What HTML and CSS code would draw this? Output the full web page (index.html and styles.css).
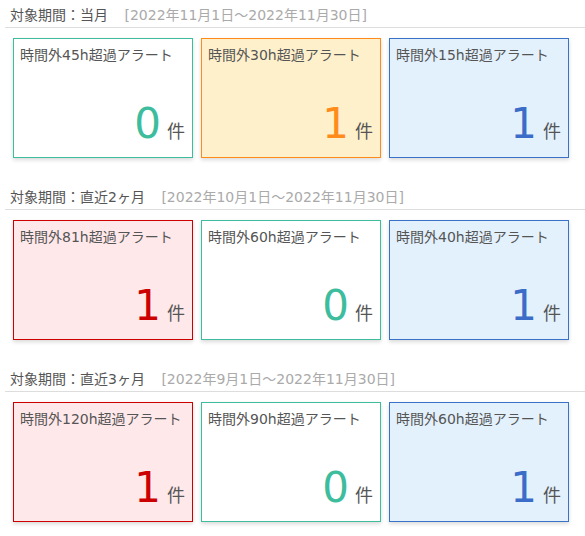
FILE: index.html
```html
<!DOCTYPE html>
<html lang="ja">
<head>
  <meta charset="UTF-8">
  <title>残業アラート</title>
  <link rel="stylesheet" href="styles.css">
</head>
<body>

  <div class="periodo">
    <div class="cabecera">
      <span class="nombre">対象期間：当月</span>
      <span class="rango">[2022年11月1日～2022年11月30日]</span>
    </div>
    <div class="tarjetas">
      <div class="tarjeta verde">
        <div class="titulo">時間外45h超過アラート</div>
        <div class="cuenta"><span class="num">0</span><span class="ken">件</span></div>
      </div>
      <div class="tarjeta naranja">
        <div class="titulo">時間外30h超過アラート</div>
        <div class="cuenta"><span class="num">1</span><span class="ken">件</span></div>
      </div>
      <div class="tarjeta azul">
        <div class="titulo">時間外15h超過アラート</div>
        <div class="cuenta"><span class="num">1</span><span class="ken">件</span></div>
      </div>
    </div>
  </div>

  <div class="periodo">
    <div class="cabecera">
      <span class="nombre">対象期間：直近2ヶ月</span>
      <span class="rango">[2022年10月1日～2022年11月30日]</span>
    </div>
    <div class="tarjetas">
      <div class="tarjeta rojo">
        <div class="titulo">時間外81h超過アラート</div>
        <div class="cuenta"><span class="num">1</span><span class="ken">件</span></div>
      </div>
      <div class="tarjeta verde">
        <div class="titulo">時間外60h超過アラート</div>
        <div class="cuenta"><span class="num">0</span><span class="ken">件</span></div>
      </div>
      <div class="tarjeta azul">
        <div class="titulo">時間外40h超過アラート</div>
        <div class="cuenta"><span class="num">1</span><span class="ken">件</span></div>
      </div>
    </div>
  </div>

  <div class="periodo">
    <div class="cabecera">
      <span class="nombre">対象期間：直近3ヶ月</span>
      <span class="rango">[2022年9月1日～2022年11月30日]</span>
    </div>
    <div class="tarjetas">
      <div class="tarjeta rojo">
        <div class="titulo">時間外120h超過アラート</div>
        <div class="cuenta"><span class="num">1</span><span class="ken">件</span></div>
      </div>
      <div class="tarjeta verde">
        <div class="titulo">時間外90h超過アラート</div>
        <div class="cuenta"><span class="num">0</span><span class="ken">件</span></div>
      </div>
      <div class="tarjeta azul">
        <div class="titulo">時間外60h超過アラート</div>
        <div class="cuenta"><span class="num">1</span><span class="ken">件</span></div>
      </div>
    </div>
  </div>

</body>
</html>
```

FILE: styles.css
```css
body {
  font-family: "DejaVu Sans", "Noto Sans CJK JP", sans-serif;
  background-color: #fff;
  color: #555;
  margin: 0;
}

.periodo {
  margin-left: 5px;
  margin-bottom: 24px;
}

.cabecera {
  font-size: 14px;
  line-height: 20px;
  padding: 5px 0 2px 5px;
  border-bottom: 1px solid #ddd;
}

.rango {
  color: #aaa;
  margin-left: 12px;
}

.tarjetas {
  display: flex;
  gap: 8px;
  margin-top: 10px;
  padding-left: 8px;
}

.tarjeta {
  box-sizing: border-box;
  width: 180px;
  height: 120px;
  border: 1px solid #ccc;
  background-color: #fff;
  box-shadow: 0 2px 4px rgba(0, 0, 0, 0.15);
  display: flex;
  flex-direction: column;
  justify-content: space-between;
  padding: 6px 7px 12px 6px;
}

.titulo {
  font-size: 14px;
  line-height: 20px;
}

.cuenta {
  text-align: right;
  font-size: 42px;
  line-height: 1;
}

.ken {
  font-size: 18px;
  margin-left: 6px;
}

.verde {
  border-color: #3dbd9d;
}

.verde .num {
  color: #3dbd9d;
}

.naranja {
  border-color: #ff8c1a;
  background-color: #fff0cc;
}

.naranja .num {
  color: #ff8c1a;
}

.azul {
  border-color: #3a72c8;
  background-color: #e3f1fd;
}

.azul .num {
  color: #3a6cc8;
}

.rojo {
  border-color: #cc0000;
  background-color: #ffe8ea;
}

.rojo .num {
  color: #cc0000;
}
```
